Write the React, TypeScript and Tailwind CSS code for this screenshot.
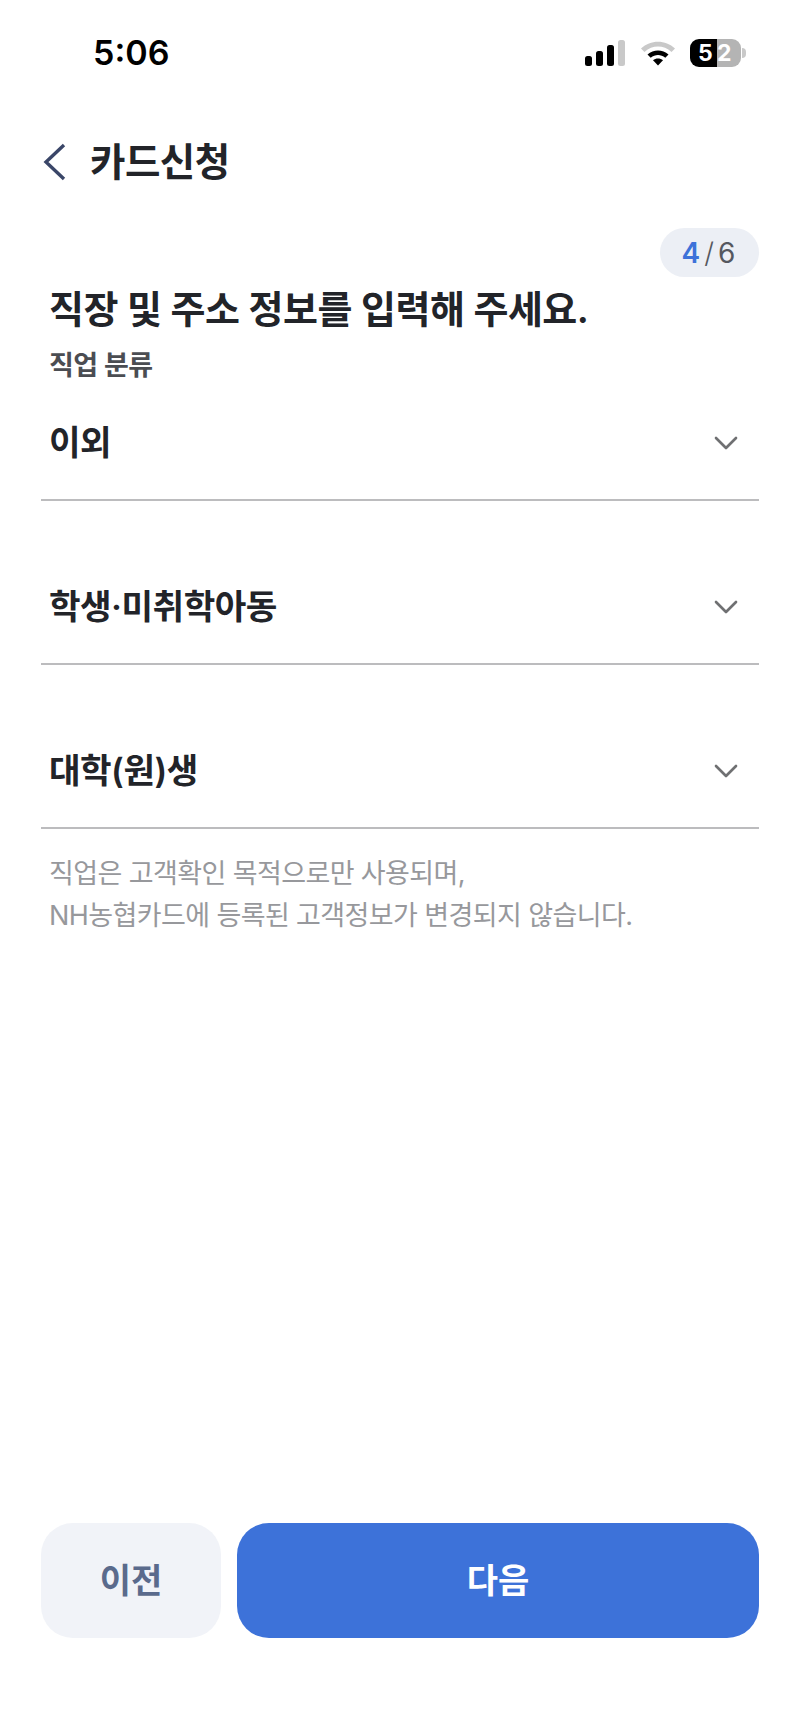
import { ChevronDown } from "lucide-react";

const FONT = "font-['Inter','Noto_Sans_CJK_KR',sans-serif]";

function SelectRow({ value, className }: { value: string; className?: string }) {
  return (
    <div className={`flex h-[104px] items-center justify-between border-b-2 border-[#bcbcbe] pb-[10px] pl-[8px] pr-[13px] ${className ?? ""}`}>
      <span className="text-[34.3px] leading-[44px] font-semibold tracking-[-0.5px] text-[#222429]">{value}</span>
      <ChevronDown className="size-[40px] text-[#6f7072]" strokeWidth={1.6} />
    </div>
  );
}

function StatusIcons() {
  return (
    <div className="flex items-center">
      <svg width="40" height="26" viewBox="0 0 40 26" className="mr-[15px]">
        <rect x="0" y="16" width="7" height="10" rx="2.5" fill="#000" />
        <rect x="11" y="11" width="7" height="15" rx="2.5" fill="#000" />
        <rect x="22" y="5" width="7" height="21" rx="2.5" fill="#000" />
        <rect x="33" y="0" width="7" height="26" rx="2.5" fill="#c9c9c9" />
      </svg>
      <svg width="36" height="26" viewBox="0 0 36 26" className="mr-[14px]">
        <path d="M1 8.5C10.5 -0.5 25.5 -0.5 35 8.5L31.5 12C23.5 4.8 12.5 4.8 4.5 12Z" fill="#c9c9c9" />
        <path d="M7.5 14.5C13.5 9 22.5 9 28.5 14.5L25.3 17.8C20.8 14 15.2 14 10.7 17.8Z" fill="#000" />
        <path d="M13 20.2C15.8 18 20.2 18 23 20.2L18 25.5Z" fill="#000" />
      </svg>
      <div className="flex h-[28px] w-[51px] overflow-hidden rounded-[9px] text-[23px] leading-[28px] font-bold text-white">
        <span className="w-[27px] bg-black pl-[8px]">5</span>
        <span className="flex-1 bg-[#b4b4b4]">2</span>
      </div>
      <div className="ml-[1px] h-[10px] w-[4px] rounded-r-full bg-[#c9c9c9]" />
    </div>
  );
}

export default function App() {
  return (
    <div className={`flex h-[1732px] w-[800px] flex-col bg-white ${FONT}`}>
      <div className="flex h-[106px] items-start justify-between pt-[34px] pl-[93px] pr-[54px]">
        <span className="text-[34px] leading-[38px] font-semibold text-black">5:06</span>
        <div className="pt-[5px]">
          <StatusIcons />
        </div>
      </div>

      <header className="mt-[28px] flex h-[56px] items-center pl-[41px]">
        <svg width="26" height="38" viewBox="0 0 26 38" fill="none">
          <path d="M23 2L5 19L23 36" stroke="#3a4668" strokeWidth="3.4" />
        </svg>
        <h1 className="ml-[23px] text-[38.5px] leading-[48px] font-semibold tracking-[-0.5px] text-[#222429]">카드신청</h1>
      </header>

      <main className="flex flex-1 flex-col px-[41px]">
        <div className="mt-[38px] flex justify-end">
          <div className="flex h-[49px] w-[99px] items-center justify-center rounded-full bg-[#eceff5] pr-[2px] text-[28px] leading-none">
            <span className="font-semibold text-[#3d72d9]">4</span>
            <span className="mx-[4px] font-light text-[#55585f]">/</span>
            <span className="text-[#55585f]">6</span>
          </div>
        </div>

        <h2 className="mt-[9px] pl-[8px] text-[38px] leading-[46px] font-semibold tracking-[-0.5px] text-[#222429]">
          직장 및 주소 정보를 입력해 주세요.
        </h2>
        <p className="mt-[17px] pl-[8px] text-[27px] leading-[34px] font-semibold tracking-[-0.5px] text-[#4b4d52]">직업 분류</p>

        <SelectRow value="이외" className="mt-[14px]" />
        <SelectRow value="학생·미취학아동" className="mt-[60px]" />
        <SelectRow value="대학(원)생" className="mt-[60px]" />

        <p className="mt-[24px] pl-[8px] text-[27px] leading-[42px] tracking-[-0.6px] text-[#97989c]">
          직업은 고객확인 목적으로만 사용되며,
          <br />
          NH농협카드에 등록된 고객정보가 변경되지 않습니다.
        </p>

        <div className="mt-auto mb-[94px] flex gap-[16px]">
          <button className="h-[115px] w-[180px] rounded-[32px] bg-[#f1f3f8] text-[34px] font-semibold text-[#5a6a8c]">이전</button>
          <button className="h-[115px] flex-1 rounded-[32px] bg-[#3d72d9] text-[34px] font-semibold text-white">다음</button>
        </div>
      </main>
    </div>
  );
}
